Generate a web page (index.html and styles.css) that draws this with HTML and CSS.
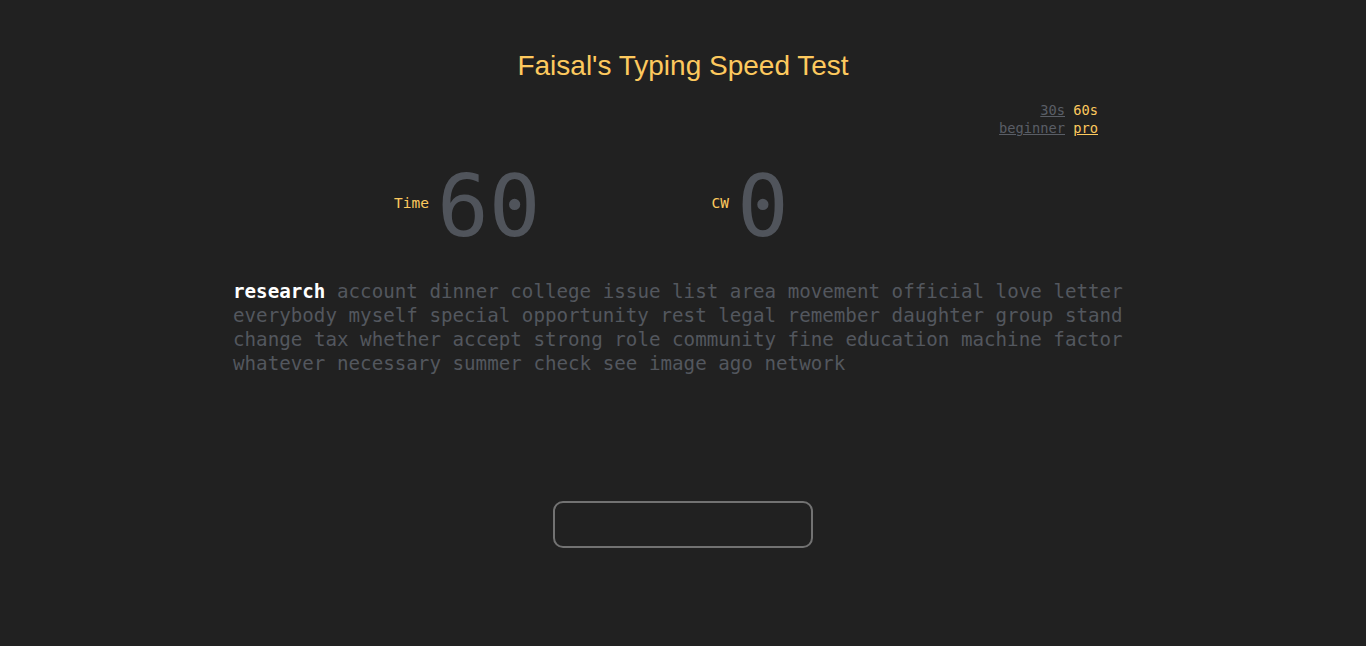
FILE: index.html
```html
<!DOCTYPE html>
<html>
<head>
<meta charset="utf-8">
<title>Faisal's Typing Speed Test</title>
<link rel="stylesheet" href="styles.css">
</head>
<body>
<main class="app">
  <h1 class="title">Faisal's Typing Speed Test</h1>
  <div class="options">
    <div class="opt-row"><span class="opt link">30s</span> <span class="opt active">60s</span></div>
    <div class="opt-row"><span class="opt link">beginner</span> <span class="opt active link">pro</span></div>
  </div>
  <div class="stats">
    <div class="stat stat-time"><span class="stat-label">Time</span><span class="stat-value">60</span></div>
    <div class="stat stat-cw"><span class="stat-label">CW</span><span class="stat-value">0</span></div>
  </div>
  <div class="words"><span class="word current">research</span> <span class="word">account</span> <span class="word">dinner</span> <span class="word">college</span> <span class="word">issue</span> <span class="word">list</span> <span class="word">area</span> <span class="word">movement</span> <span class="word">official</span> <span class="word">love</span> <span class="word">letter</span> <span class="word">everybody</span> <span class="word">myself</span> <span class="word">special</span> <span class="word">opportunity</span> <span class="word">rest</span> <span class="word">legal</span> <span class="word">remember</span> <span class="word">daughter</span> <span class="word">group</span> <span class="word">stand</span> <span class="word">change</span> <span class="word">tax</span> <span class="word">whether</span> <span class="word">accept</span> <span class="word">strong</span> <span class="word">role</span> <span class="word">community</span> <span class="word">fine</span> <span class="word">education</span> <span class="word">machine</span> <span class="word">factor</span> <span class="word">whatever</span> <span class="word">necessary</span> <span class="word">summer</span> <span class="word">check</span> <span class="word">see</span> <span class="word">image</span> <span class="word">ago</span> <span class="word">network</span></div>
  <div class="input-wrap"><input class="type-input" type="text" aria-label="Type here"></div>
</main>
</body>
</html>
```
FILE: styles.css
```css
html, body {
  margin: 0;
  padding: 0;
  background: #212121;
  height: 100%;
}
body {
  font-family: "DejaVu Sans Mono", "Liberation Mono", monospace;
}
.app {
  width: 900px;
  margin: 0 auto;
  display: flex;
  flex-direction: column;
}
.title {
  font-family: "Liberation Sans", Arial, sans-serif;
  font-weight: normal;
  font-size: 28px;
  line-height: 32px;
  color: #fdc95e;
  text-align: center;
  margin: 50px 0 0;
}
.options {
  margin-top: 19px;
  padding-right: 35px;
  text-align: right;
  font-size: 13.7px;
  line-height: 18px;
}
.opt { color: #5a5e66; }
.opt.link { text-decoration: underline; }
.opt.active { color: #fdc95e; }
.stats {
  display: flex;
  margin-top: 26px;
  padding-left: 161px;
}
.stat {
  display: flex;
  align-items: center;
}
.stat-cw { margin-left: 171px; }
.stat-label {
  color: #fdc95e;
  font-size: 14.5px;
  margin-right: 8px;
  margin-bottom: 6px;
}
.stat-value {
  color: #50545b;
  font-size: 86px;
  line-height: 86px;
}
.words {
  margin-top: 31px;
  font-size: 19.2px;
  line-height: 24px;
  color: #53575e;
}
.word.current {
  color: #ffffff;
  font-weight: bold;
}
.input-wrap {
  display: flex;
  justify-content: center;
  margin-top: 125px;
}
.type-input {
  width: 260px;
  height: 47px;
  box-sizing: border-box;
  border: 2px solid #727272;
  border-radius: 10px;
  background: #212121;
  outline: none;
  color: #ddd;
  font-family: inherit;
  font-size: 18px;
  padding: 0 10px;
}
```
